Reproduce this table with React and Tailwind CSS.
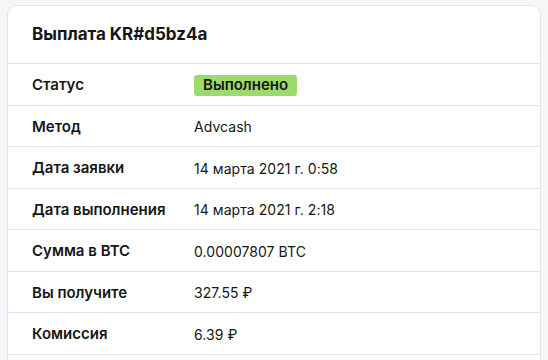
import React from 'react';

const rows = [
  { label: 'Метод', value: 'Advcash' },
  { label: 'Дата заявки', value: '14 марта 2021 г. 0:58' },
  { label: 'Дата выполнения', value: '14 марта 2021 г. 2:18' },
  { label: 'Сумма в BTC', value: '0.00007807 BTC' },
  { label: 'Вы получите', value: '327.55 ₽' },
  { label: 'Комиссия', value: '6.39 ₽' },
];

const App = () => {
  return (
    <div className="h-screen overflow-hidden bg-[#f6f6f8] pt-[5px] px-[7px] text-[#161616]" style={{ fontFamily: 'Inter, "Noto Sans", sans-serif' }}>
      <div className="bg-white border border-[#e4e1f2] rounded-[10px] overflow-hidden">
        <div className="h-[58px] px-6 flex items-center border-b border-[#e4e1f2]">
          <h2 className="text-[17px] font-bold">Выплата KR#d5bz4a</h2>
        </div>
        <div className="h-[41.5px] px-6 flex items-center border-b border-[#e4e1f2] pt-[2px]">
          <div className="w-[162px] text-[15px] font-semibold">Статус</div>
          <span className="bg-[#9cdb6b] rounded-[3px] px-[9px] h-[21px] flex items-center text-[15px] font-semibold">Выполнено</span>
        </div>
        {rows.map((r, i) => (
          <div key={i} className="h-[41.5px] px-6 flex items-center border-b border-[#e4e1f2] pt-[2px]">
            <div className="w-[162px] text-[15px] font-semibold">{r.label}</div>
            <div className="text-[14px] tracking-[0.05px]">{r.value}</div>
          </div>
        ))}
        <div className="h-[41.5px]" />
      </div>
    </div>
  );
};

export default App;
